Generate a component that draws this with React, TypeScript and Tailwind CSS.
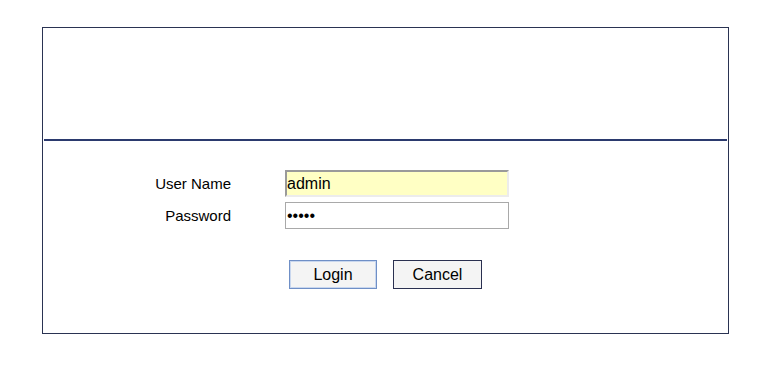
import {useState} from "react";

export default function App() {
  const [userName, setUserName] = useState("admin");
  const [password, setPassword] = useState("•••••");

  return (
    <div className="min-h-[367px] w-[763px] bg-white pl-[42px] pt-[27px] font-['Liberation_Sans',Arial,sans-serif] text-black">
      <div className="flex h-[307px] w-[687px] flex-col border border-[#2a3352]">
        <div className="h-[111px]" />
        <div className="mx-px h-[2px] bg-[#2b3a6e]" />

        <form
          className="mt-[29px] flex flex-col"
          onSubmit={(event) => event.preventDefault()}
        >
          <div className="flex items-center">
            <label className="mt-[2px] w-[188px] text-right text-[15px]">User Name</label>
            <input
              value={userName}
              onChange={(event) => setUserName(event.target.value)}
              className="ml-[54px] h-[27px] w-[224px] border-2 border-b-[#ececec] border-l-[#9a9a9a] border-r-[#ececec] border-t-[#9a9a9a] bg-[#ffffc4] px-0 text-[16px] leading-none outline-none"
            />
          </div>

          <div className="mt-[5px] flex items-center">
            <label className="mt-[2px] w-[188px] text-right text-[15px]">Password</label>
            <input
              value={password}
              onChange={(event) => setPassword(event.target.value)}
              className="ml-[54px] h-[27px] w-[224px] border border-[#a9a9a9] bg-white px-[1px] text-[16px] leading-none outline-none"
            />
          </div>

          <div className="ml-[246px] mt-[31px] flex gap-[16px]">
            <button
              type="submit"
              className="h-[29px] w-[88px] border border-[#6f8fc6] bg-[#f4f4f4] text-[16px] shadow-[0_0_0_1px_#c9d7ee_inset]"
            >
              Login
            </button>
            <button
              type="button"
              className="h-[29px] w-[89px] border border-[#2a3050] bg-[#f4f4f4] text-[16px]"
            >
              Cancel
            </button>
          </div>
        </form>
      </div>
    </div>
  );
}
